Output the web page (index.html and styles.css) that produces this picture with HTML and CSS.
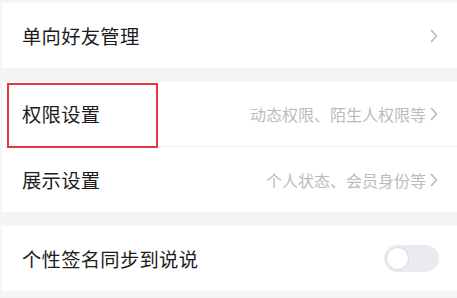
FILE: index.html
```html
<!DOCTYPE html>
<html lang="zh">
<head>
<meta charset="utf-8">
<link rel="stylesheet" href="styles.css">
</head>
<body>
<div class="page">
  <div class="group">
    <div class="row">
      <span class="label">单向好友管理</span>
      <span class="right"><svg class="chev" viewBox="0 0 8 14" width="8" height="14"><polyline points="1.5,1.5 6.5,7 1.5,12.5" /></svg></span>
    </div>
  </div>
  <div class="group">
    <div class="row row-div">
      <span class="label">权限设置</span>
      <span class="right"><span class="hint">动态权限、陌生人权限等</span><svg class="chev" viewBox="0 0 8 14" width="8" height="14"><polyline points="1.5,1.5 6.5,7 1.5,12.5" /></svg></span>
      <div class="mark"></div>
    </div>
    <div class="row">
      <span class="label">展示设置</span>
      <span class="right"><span class="hint">个人状态、会员身份等</span><svg class="chev" viewBox="0 0 8 14" width="8" height="14"><polyline points="1.5,1.5 6.5,7 1.5,12.5" /></svg></span>
    </div>
  </div>
  <div class="group">
    <div class="row">
      <span class="label">个性签名同步到说说</span>
      <span class="toggle"><span class="knob"></span></span>
    </div>
  </div>
</div>
</body>
</html>
```
FILE: styles.css
```css
html, body {
  margin: 0;
  padding: 0;
  background: #f4f5f7;
}
body {
  width: 457px;
  height: 298px;
  overflow: hidden;
  font-family: "Noto Sans CJK SC", "Noto Sans", sans-serif;
}
.page {
  padding-top: 3px;
  padding-left: 2px;
  display: flex;
  flex-direction: column;
  gap: 14px;
}
.group {
  background: #fff;
  display: flex;
  flex-direction: column;
}
.row {
  position: relative;
  height: 65px;
  display: flex;
  align-items: center;
  justify-content: space-between;
  padding: 0 18px 0 20px;
  box-sizing: border-box;
}
.row-div {
  height: 64px;
  border-bottom: 1px solid #eeeff2;
  box-sizing: content-box;
}
.label {
  font-size: 19.3px;
  color: #1c1c1e;
  letter-spacing: 0.3px;
}
.right {
  display: flex;
  align-items: center;
  gap: 4px;
}
.hint {
  font-size: 16px;
  color: #b9bcc3;
}
.chev {
  fill: none;
  stroke: #b3b6bd;
  stroke-width: 1.5;
  stroke-linecap: round;
  stroke-linejoin: round;
  margin-right: 1px;
}
.mark {
  position: absolute;
  left: 5px;
  top: 1px;
  width: 147px;
  height: 61px;
  border: 2.5px solid #e3393f;
}
.toggle {
  width: 55px;
  height: 27px;
  border-radius: 14px;
  background: #e9ebf0;
  display: flex;
  align-items: center;
  padding-left: 3px;
  box-sizing: border-box;
}
.knob {
  width: 21px;
  height: 21px;
  border-radius: 50%;
  background: #fff;
  box-shadow: 0 0 0 1px #dcdfe5;
}
```
